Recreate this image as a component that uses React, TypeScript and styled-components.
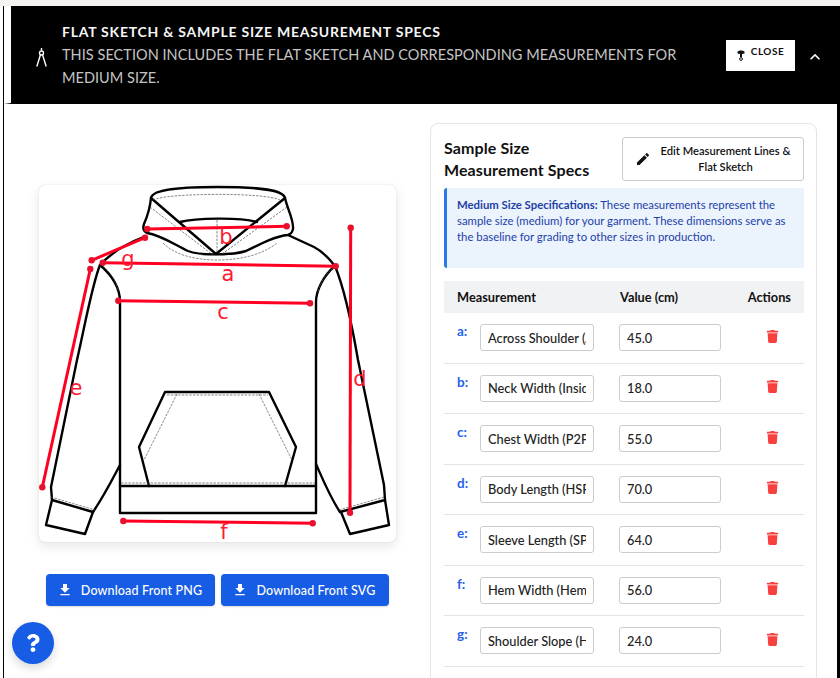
import styled, { createGlobalStyle } from 'styled-components';
import { MdEdit, MdFileDownload, MdKeyboardArrowUp } from 'react-icons/md';
import { FaQuestion, FaTrash } from 'react-icons/fa';

const GlobalStyle = createGlobalStyle`
    html, body {
        margin: 0;
        height: 100%;
        overflow: hidden;
        background: #fff;
    }
    * {
        box-sizing: border-box;
    }
    body {
        font-family: "Lato", "Noto Sans", sans-serif;
    }
`;

const TopStrip = styled.div`
    height: 6px;
    background: #f4f2ee;
`;

const Shell = styled.div`
    margin-left: 3px;
    height: 672px;
    border-left: 1px solid #000;
    overflow: hidden;
    display: flex;
    flex-direction: column;
`;

const Banner = styled.header`
    height: 98px;
    flex-shrink: 0;
    background: #000;
    border-left: 7px solid #fff;
    border-bottom: 1px solid #000;
    display: flex;
    align-items: center;
    color: #fff;
    padding-left: 25px;
`;

const BannerIcon = styled.svg`
    width: 11px;
    height: 19px;
    flex-shrink: 0;
    margin-top: 6px;
`;

const BannerText = styled.div`
    width: 640px;
    margin-left: 15px;
    flex-shrink: 0;
`;

const BannerTitle = styled.div`
    font-size: 14px;
    font-weight: 700;
    letter-spacing: 0.76px;
    line-height: 22px;
    color: #f5f5f5;
`;

const BannerSub = styled.div`
    font-size: 14.5px;
    letter-spacing: 0.04px;
    line-height: 23px;
    color: #c4c4c4;
`;

const CloseButton = styled.button`
    width: 69px;
    height: 31px;
    margin-left: 24px;
    margin-top: 2px;
    border: none;
    background: #fff;
    color: #111;
    font: 700 10px "Lato", sans-serif;
    letter-spacing: 0.5px;
    display: flex;
    justify-content: center;
    padding: 5px 0 0 0;
    gap: 6px;
`;

const CloseIcon = styled.svg`
    width: 8px;
    height: 11px;
    margin-top: 5px;
`;

const Chevron = styled.span`
    display: flex;
    margin-left: 10px;
    margin-top: 4px;
    font-size: 20px;
`;

const Main = styled.main`
    flex: 1;
    display: flex;
    min-height: 0;
    background: #fff;
    border-right: 3px solid #000;
    padding: 19px 20px 0 0;
`;

const SketchColumn = styled.section`
    width: 426px;
    flex-shrink: 0;
    padding: 62px 0 0 35px;
`;

const SketchCard = styled.div`
    width: 357px;
    height: 357px;
    background: #fff;
    border-radius: 6px;
    box-shadow: 0 0 1px rgba(0, 0, 0, 0.25), 0 4px 12px rgba(0, 0, 0, 0.1);
`;

const SketchSvg = styled.svg`
    display: block;
    width: 357px;
    height: 357px;
    overflow: visible;
`;

const DownloadRow = styled.div`
    display: flex;
    gap: 6px;
    margin: 32px 0 0 7px;
`;

const DownloadButton = styled.button<{ $width: number }>`
    width: ${(p) => p.$width}px;
    height: 32px;
    border: none;
    border-radius: 4px;
    background: #175ce5;
    color: #fff;
    font: 500 12.5px "Lato", sans-serif;
    letter-spacing: 0.15px;
    display: flex;
    align-items: center;
    justify-content: center;
    gap: 8px;
    padding: 0 2px 0 0;
    box-shadow: 0 1px 2px rgba(0, 0, 0, 0.15);
`;

const HelpButton = styled.button`
    position: fixed;
    left: 12px;
    top: 622px;
    width: 42px;
    height: 42px;
    border: none;
    border-radius: 50%;
    background: #175ce5;
    color: #fff;
    display: flex;
    align-items: center;
    justify-content: center;
    font-size: 18px;
    box-shadow: 0 4px 10px rgba(0, 0, 0, 0.16);
`;

const SpecsCard = styled.section`
    flex: 1;
    height: 570px;
    border: 1px solid #e3e5e9;
    border-radius: 8px;
    padding: 13px 12px 0 13px;
`;

const SpecsHead = styled.div`
    display: flex;
    justify-content: space-between;
    align-items: flex-start;
`;

const SpecsTitle = styled.h2`
    margin: 0;
    width: 170px;
    font-size: 16px;
    font-weight: 700;
    letter-spacing: 0.1px;
    line-height: 22px;
    color: #111;
`;

const EditButton = styled.button`
    width: 182px;
    height: 44px;
    background: #fff;
    border: 1px solid #c9ccd1;
    border-radius: 3px;
    color: #111;
    font: 600 11.2px/16px "Lato", sans-serif;
    display: flex;
    align-items: center;
    padding: 0 12px;
    gap: 9px;

    svg {
        flex-shrink: 0;
    }
`;

const EditLabel = styled.span`
    flex: 1;
    text-align: center;
`;

const InfoBox = styled.div`
    height: 80px;
    margin-top: 7px;
    background: #ebf3fd;
    border-left: 3px solid #2b78e8;
    border-radius: 3px;
    padding: 9px 10px;
    font-size: 11.35px;
    line-height: 16px;
    color: #1e3fa8;

    b {
        font-weight: 700;
    }
`;

const SpecsTable = styled.div`
    margin-top: 13px;
`;

const HeadRow = styled.div`
    height: 32px;
    background: #f1f2f4;
    display: grid;
    grid-template-columns: 163px 121px 1fr;
    align-items: center;
    padding: 0 13px;
    font-size: 12.8px;
    font-weight: 700;
    color: #111;
`;

const ActionsHead = styled.span`
    text-align: right;
`;

const SpecRow = styled.div`
    height: 50.5px;
    border-bottom: 1px solid #e2e4e8;
    display: grid;
    grid-template-columns: 23px 139px 102px 1fr;
    align-items: center;
    padding-left: 13px;
`;

const RowLetter = styled.span`
    align-self: start;
    margin-top: 10px;
    font-size: 13.5px;
    font-weight: 700;
    color: #2563eb;
`;

const FieldInput = styled.input`
    height: 27px;
    border: 1px solid #c9ccd1;
    border-radius: 3px;
    background: #fff;
    color: #222;
    padding: 0 7px;
    font: 500 12.8px "Lato", sans-serif;
    outline: none;
`;

const NameInput = styled(FieldInput)`
    width: 114px;
`;

const ValueInput = styled(FieldInput)`
    width: 102px;
`;

const TrashButton = styled.button`
    border: none;
    background: none;
    padding: 0;
    color: #f8403f;
    font-size: 13px;
    display: flex;
    justify-content: center;
    margin: -3px 0 0 24px;
    width: 54px;
`;

const Outline = styled.path`
    fill: none;
    stroke: #000;
    stroke-width: 2.4;
    stroke-linejoin: round;
    stroke-linecap: round;
`;

const Dashed = styled.path`
    fill: none;
    stroke: #555;
    stroke-width: 0.7;
    stroke-dasharray: 2.5 1.2;
`;

const MeasureLine = styled.line`
    stroke: #ff0022;
    stroke-width: 3;
`;

const MeasureDot = styled.circle`
    fill: #e8102c;
`;

const MeasureLabel = styled.text`
    fill: #ff1a33;
    font-family: "DejaVu Sans", sans-serif;
    font-size: 21px;
    text-anchor: middle;
`;

const outlines = [
    // hood
    'M151 198 C152 191 170 187 217 187 C262 187 283 190 285 198 C287 208 294 220 293 229 C292 233 291 234 288 235 C276 236 262 243 246 251 C234 255 200 256 188 251 C172 243 160 235 147 233 C143 231 143 227 144 224 C148 215 150 208 151 198 Z',
    'M151 198 L216 254 L285 198',
    'M180 222 C195 218 240 217 257 222',
    // shoulders, sleeves, body
    'M146 236 C130 242 112 252 100 265 C114 277 120 290 120 302 L120 513 L316 513 L316 302 C316 290 324 275 335 266 C328 257 322 251 314 247 L288 235',
    'M100 265 C92 285 85 325 77 360 L51 487 L52 500 L93 512 C104 496 112 480 120 465',
    'M335 266 C345 290 352 325 358 360 L384 485 L385 500 L340 512 C330 497 323 480 316 464',
    'M52 500 L46 525 L85 534 L93 512',
    'M385 500 L389 525 L350 534 L341 512',
    'M120 486 L316 486',
    // pocket
    'M149 486 L139 447 L165 392 L269 392 L296 447 L285 486',
];

const dashes = [
    'M153 200 C165 193 265 192 280 200',
    'M217 220 L217 252',
    'M150 207 L213 255',
    'M287 207 L222 254',
    'M163 243 C175 255 195 260 217 260 C240 260 262 255 277 243',
    'M103 266 C112 274 117 283 118 292',
    'M333 268 C325 275 320 283 318 292',
    'M51 497 L95 510',
    'M339 510 L384 497',
    'M121 483 L315 483',
    'M167 395 L268 395',
    'M177 394 L144 460',
    'M259 394 L292 460',
];

const measures = [
    { label: 'a', x1: 102.7, y1: 262.7, x2: 335.7, y2: 266.3, tx: 228, ty: 281 },
    { label: 'b', x1: 147.3, y1: 229, x2: 286.7, y2: 226.3, tx: 226, ty: 244 },
    { label: 'c', x1: 118.3, y1: 300.7, x2: 310, y2: 303.3, tx: 223, ty: 319 },
    { label: 'd', x1: 350.7, y1: 227.7, x2: 350, y2: 512.7, tx: 360, ty: 386 },
    { label: 'e', x1: 90.3, y1: 269, x2: 42.3, y2: 487.3, tx: 76, ty: 395 },
    { label: 'f', x1: 123.3, y1: 521, x2: 312.7, y2: 523.3, tx: 224, ty: 539 },
    { label: 'g', x1: 91.7, y1: 260.3, x2: 145, y2: 237.7, tx: 128, ty: 266 },
];

const specs = [
    { letter: 'a', name: 'Across Shoulder (A)', value: '45.0' },
    { letter: 'b', name: 'Neck Width (Inside)', value: '18.0' },
    { letter: 'c', name: 'Chest Width (P2P)', value: '55.0' },
    { letter: 'd', name: 'Body Length (HSP)', value: '70.0' },
    { letter: 'e', name: 'Sleeve Length (SP)', value: '64.0' },
    { letter: 'f', name: 'Hem Width (Hem)', value: '56.0' },
    { letter: 'g', name: 'Shoulder Slope (H)', value: '24.0' },
];

function HoodieSketch() {
    return (
        <SketchSvg viewBox="39 185 357 357">
            {outlines.map((d) => <Outline key={d} d={d} />)}
            {dashes.map((d) => <Dashed key={d} d={d} />)}
            {measures.map((m) => (
                <g key={m.label}>
                    <MeasureLine x1={m.x1} y1={m.y1} x2={m.x2} y2={m.y2} />
                    <MeasureDot cx={m.x1} cy={m.y1} r={3.2} />
                    <MeasureDot cx={m.x2} cy={m.y2} r={3.2} />
                    <MeasureLabel x={m.tx} y={m.ty}>{m.label}</MeasureLabel>
                </g>
            ))}
        </SketchSvg>
    );
}

function App() {
    return (
        <>
            <GlobalStyle />
            <TopStrip />
            <Shell>
                <Banner>
                    <BannerIcon viewBox="0 0 11 19" fill="none" stroke="#fff" strokeWidth="1.4">
                        <path d="M5.5 0 V2.5" />
                        <circle cx="5.5" cy="5" r="2" />
                        <path d="M4.4 7 L0.8 18.5 M6.6 7 L10.2 18.5" />
                    </BannerIcon>
                    <BannerText>
                        <BannerTitle>FLAT SKETCH &amp; SAMPLE SIZE MEASUREMENT SPECS</BannerTitle>
                        <BannerSub>
                            THIS SECTION INCLUDES THE FLAT SKETCH AND CORRESPONDING MEASUREMENTS FOR MEDIUM SIZE.
                        </BannerSub>
                    </BannerText>
                    <CloseButton>
                        <CloseIcon viewBox="0 0 8 11">
                            <path d="M0.5 1.5 C2 0 6 0 7.5 1.5 L7.5 3.5 L5 4 L5 7 L3 7 L3 4 L0.5 3.5 Z" fill="#111" />
                            <circle cx="4" cy="9" r="1.4" fill="none" stroke="#111" strokeWidth="1" />
                        </CloseIcon>
                        CLOSE
                    </CloseButton>
                    <Chevron><MdKeyboardArrowUp /></Chevron>
                </Banner>
                <Main>
                    <SketchColumn>
                        <SketchCard>
                            <HoodieSketch />
                        </SketchCard>
                        <DownloadRow>
                            <DownloadButton $width={169}>
                                <MdFileDownload size={16} />
                                Download Front PNG
                            </DownloadButton>
                            <DownloadButton $width={168}>
                                <MdFileDownload size={16} />
                                Download Front SVG
                            </DownloadButton>
                        </DownloadRow>
                    </SketchColumn>
                    <SpecsCard>
                        <SpecsHead>
                            <SpecsTitle>Sample Size Measurement Specs</SpecsTitle>
                            <EditButton>
                                <MdEdit size={16} />
                                <EditLabel>Edit Measurement Lines &amp; Flat Sketch</EditLabel>
                            </EditButton>
                        </SpecsHead>
                        <InfoBox>
                            <b>Medium Size Specifications:</b> These measurements represent the sample size (medium)
                            for your garment. These dimensions serve as the baseline for grading to other sizes in
                            production.
                        </InfoBox>
                        <SpecsTable>
                            <HeadRow>
                                <span>Measurement</span>
                                <span>Value (cm)</span>
                                <ActionsHead>Actions</ActionsHead>
                            </HeadRow>
                            {specs.map((spec) => (
                                <SpecRow key={spec.letter}>
                                    <RowLetter>{spec.letter}:</RowLetter>
                                    <NameInput readOnly value={spec.name} />
                                    <ValueInput readOnly value={spec.value} />
                                    <TrashButton aria-label="Delete"><FaTrash /></TrashButton>
                                </SpecRow>
                            ))}
                        </SpecsTable>
                    </SpecsCard>
                </Main>
            </Shell>
            <HelpButton aria-label="Help"><FaQuestion /></HelpButton>
        </>
    );
}

export default App;
